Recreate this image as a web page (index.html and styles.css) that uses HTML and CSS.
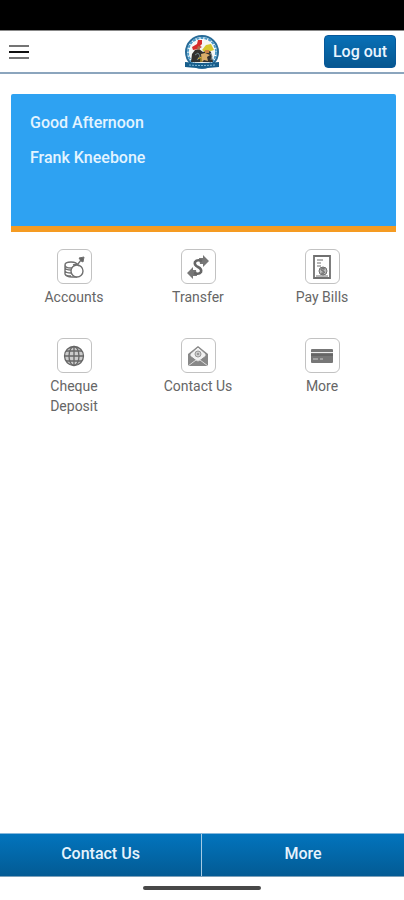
FILE: index.html
```html
<!DOCTYPE html>
<html lang="en">
<head>
<meta charset="utf-8">
<meta name="viewport" content="width=device-width, initial-scale=1">
<title>Mobile Banking</title>
<link rel="stylesheet" href="styles.css">
</head>
<body>
<div class="status-bar"></div>
<header class="header">
  <button class="menu" type="button" aria-label="Menu">
    <svg width="20" height="16" viewBox="0 0 20 16"><path d="M0 2h20M0 14h20" stroke="#747474" stroke-width="2"/><path d="M0 8h20" stroke="#111" stroke-width="2"/></svg>
  </button>
  <svg class="logo" width="36" height="34" viewBox="0 0 36 34" aria-hidden="true">
    <circle cx="18" cy="17" r="16" fill="#fff" stroke="#286b98" stroke-width="2"/>
    <circle cx="18" cy="17" r="14" fill="none" stroke="#4e9cc8" stroke-width="2" stroke-dasharray="3 1"/>
    <circle cx="18" cy="17" r="12.5" fill="#f5f7f5"/>
    <path d="M7 27l1-8 3-4 4-1 4 3 5-3 3 3 2 10z" fill="#33312e"/>
    <path d="M8 12l5-3 1-4 4 0 0 4-2 2 2 1-4 2-5 1z" fill="#d62c2b"/>
    <path d="M14 11l3 1-2 3-2-1z" fill="#b46e48"/>
    <path d="M18 15l4-5 5-1 3 6-3 1-6 1z" fill="#d5c72e"/>
    <path d="M21 15l4 0 0 3-4 0z" fill="#c98145"/>
    <path d="M17 19l4-1 5 2-3 2 1 4-4-1-2 2z" fill="#d9ad6b"/>
    <path d="M11 20l3-2 2 3-3 4M26 18l2 3-1 4" fill="none" stroke="#718488" stroke-width="1"/>
    <path d="M14 24l3-2v5" fill="none" stroke="#e6bd2e" stroke-width="1"/>
    <path d="M1 27q17 2 34 0v5q-17 2-34 0z" fill="#175e8c"/>
    <path d="M5 30q13 1 26 0" fill="none" stroke="#83b9d5" stroke-width="1" stroke-dasharray="2 1"/>
  </svg>
  <button class="logout" type="button">Log out</button>
</header>
<main class="main">
  <section class="greeting">
    <p>Good Afternoon</p>
    <p>Frank Kneebone</p>
  </section>
  <nav class="tiles" aria-label="Services">
    <a class="tile" href="#accounts">
      <span class="tile-icon"><svg width="32" height="32" viewBox="0 0 32 32" fill="none" stroke="#707070"><path d="M7 14q0-3 6-3t6 3-6 3-6-3v9q1 3 7 3h5M7 17q1 2 6 2M7 20q1 2 6 2M7 23q1 2 6 2" stroke-width="1.4"/><circle cx="19" cy="20" r="6" fill="#fff" stroke-width="1.4"/><path d="M15 14l4-1 2 2M20 13l3-4" stroke-width="1.3"/><path d="M21 7l5-1-1 5-2-1z" fill="#666"/></svg></span>
      <span class="tile-label">Accounts</span>
    </a>
    <a class="tile" href="#transfer">
      <span class="tile-icon"><svg width="32" height="32" viewBox="0 0 32 32"><path d="M17 7h4V4l6 6-6 6v-3h-3zM15 25h-4v3l-6-6 6-6v3h3z" fill="#777"/><path d="M20 10q-5-2-7 1-1 3 3 5t3 5q-2 3-7 1" fill="none" stroke="#666" stroke-width="2.6"/></svg></span>
      <span class="tile-label">Transfer</span>
    </a>
    <a class="tile" href="#bills">
      <span class="tile-icon"><svg width="32" height="32" viewBox="0 0 32 32" fill="none" stroke="#707070"><path d="M8 5h16v22H8z" stroke-width="1.8"/><path d="M11 9h6M11 12h4M11 15h4" stroke-width="1.2"/><circle cx="17" cy="20" r="4" fill="#bbb" stroke-width="1"/><path d="M19 18q-3-1-4 0t2 2 1 2-3 0M17 16v8M10 25h12" stroke-width="1"/></svg></span>
      <span class="tile-label">Pay Bills</span>
    </a>
    <a class="tile" href="#deposit">
      <span class="tile-icon"><svg width="32" height="32" viewBox="0 0 32 32" fill="none" stroke="#666" stroke-width="1.3"><circle cx="16" cy="16" r="9.5" fill="#ccc"/><ellipse cx="16" cy="16" rx="5" ry="9.5"/><path d="M16 6v20M6 16h20M8 11h16M8 21h16"/></svg></span>
      <span class="tile-label">Cheque Deposit</span>
    </a>
    <a class="tile" href="#contact">
      <span class="tile-icon"><svg width="32" height="32" viewBox="0 0 32 32"><path d="M6 14L16 6l10 8v12H6z" fill="#888"/><path d="M8 14l8-7 8 7v2l-8 6-8-6z" fill="#f1f1f1" stroke="#888"/><path d="M6 26l8-6 2 1 2-1 8 6" fill="#888" stroke="#ddd"/><circle cx="16" cy="14" r="3" fill="#ccc" stroke="#999"/><circle cx="16" cy="14" r="1" fill="#888"/></svg></span>
      <span class="tile-label">Contact Us</span>
    </a>
    <a class="tile" href="#services">
      <span class="tile-icon"><svg width="32" height="32" viewBox="0 0 32 32"><rect x="5" y="9" width="22" height="14" rx="1" fill="#777"/><path d="M5 12.500h22" stroke="#eee" stroke-width="1"/><path d="M5 15h22" stroke="#666" stroke-width="2"/><path d="M7 19h5M14 19h3" stroke="#ccc"/></svg></span>
      <span class="tile-label">More</span>
    </a>
  </nav>
</main>
<footer>
  <nav class="tabs" aria-label="Footer">
    <a href="#contact">Contact Us</a>
    <a href="#more">More</a>
  </nav>
  <div class="gesture"><span></span></div>
</footer>
</body>
</html>
```
FILE: styles.css
```css
* { box-sizing: border-box; }
body {
  display: flex;
  flex-direction: column;
  min-height: 100vh;
  margin: 0;
  background: #fff;
  font-family: Roboto, "Liberation Sans", sans-serif;
}
a { color: inherit; text-decoration: none; }
.status-bar { height: 30px; background: #000; }
.header {
  display: grid;
  grid-template-columns: 1fr auto 1fr;
  align-items: center;
  height: 44px;
  padding: 0 8px;
  border-top: 1px solid #888;
  border-bottom: 2px solid #8ba5bd;
}
.menu {
  display: flex;
  justify-self: start;
  padding: 0;
  margin-left: 1px;
  border: 0;
  background: none;
}
.logo { display: block; }
.logout {
  justify-self: end;
  height: 33px;
  padding: 0 8px;
  border: 1px solid #07589a;
  border-radius: 4px;
  background: linear-gradient(#0870b7, #065790);
  color: #eaf5ff;
  font: 500 16px/24px Roboto, "Liberation Sans", sans-serif;
}
.main { flex: 1; padding: 20px 8px 0 11px; }
.greeting {
  height: 138px;
  padding: 17px 19px;
  border-bottom: 6px solid #f59b22;
  border-radius: 2px 2px 0 0;
  background: #2ea2f2;
  color: #e3f4ff;
  font-size: 16px;
  font-weight: 500;
  line-height: 24px;
}
.greeting p { margin: 0 0 11px; }
.tiles {
  display: grid;
  grid-template-columns: repeat(3, minmax(0, 1fr));
  row-gap: 31px;
  padding: 17px 12px 0 1px;
}
.tile {
  display: flex;
  flex-direction: column;
  align-items: center;
  gap: 3px;
  padding: 0 24px;
  color: #666;
  font-size: 14px;
  line-height: 20px;
  text-align: center;
}
.tile-icon {
  display: flex;
  width: 35px;
  height: 35px;
  align-items: center;
  justify-content: center;
  border: 1px solid #c2c2c2;
  border-radius: 6px;
}
.tabs {
  display: grid;
  grid-template-columns: 1fr 1fr;
  height: 44px;
  border-top: 1px solid #86b8dc;
  border-bottom: 1px solid #7ba0ba;
  background: linear-gradient(#0274bd, #035b94);
  color: #e6f3fd;
  font-size: 16px;
  font-weight: 500;
}
.tabs a { display: flex; align-items: center; justify-content: center; padding-bottom: 4px; }
.tabs a:first-child { border-right: 1px solid #a5cbe4; }
.gesture { display: flex; justify-content: center; height: 23px; padding-top: 9px; }
.gesture span { width: 118px; height: 4px; border-radius: 2px; background: #484848; }
```
